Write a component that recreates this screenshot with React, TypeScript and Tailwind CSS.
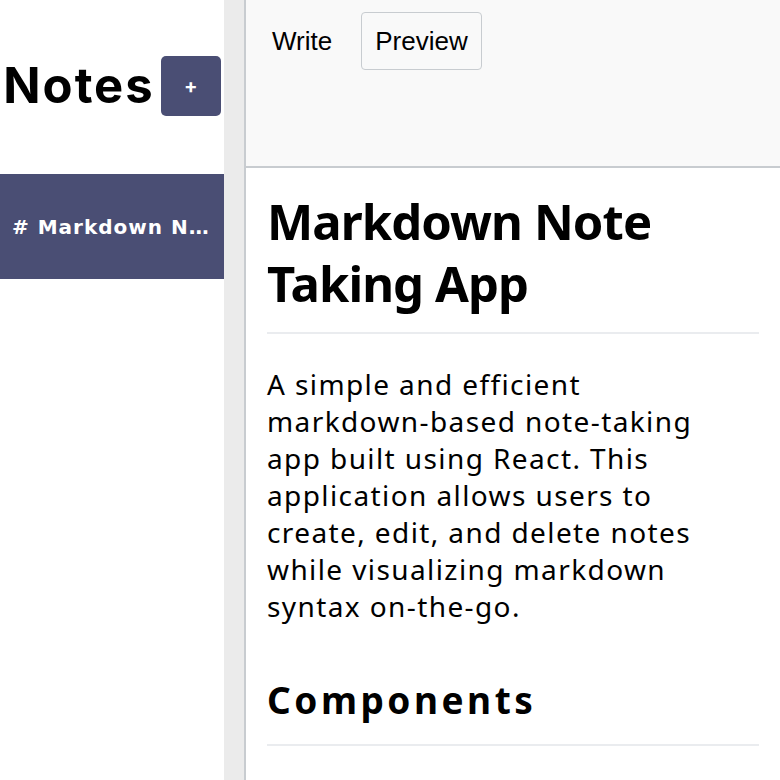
const notes = [{ id: 1, body: "# Markdown Note Taking App" }];

function Sidebar() {
  return (
    <aside className="w-[224px] shrink-0 bg-white">
      <div className="flex items-center justify-center gap-[6px] pt-[56px] pb-[58px]">
        <h3 className="font-['Inter',sans-serif] text-[49px] font-bold leading-[60px] tracking-[2px] text-black">
          Notes
        </h3>
        <button className="flex h-[60px] w-[60px] items-center justify-center rounded-[5px] bg-[#4a4e74] font-['Inter',sans-serif] text-[20px] font-bold text-white">
          +
        </button>
      </div>
      {notes.map((note) => (
        <div
          key={note.id}
          className="flex h-[105px] items-center bg-[#4a4e74] px-3 text-white"
        >
          <h4 className="truncate font-['DejaVu_Sans',sans-serif] text-[20px] font-bold tracking-[1px]">
            {note.body}
          </h4>
        </div>
      ))}
    </aside>
  );
}

const paragraph = [
  "A simple and efficient",
  "markdown-based note-taking",
  "app built using React. This",
  "application allows users to",
  "create, edit, and delete notes",
  "while visualizing markdown",
  "syntax on-the-go.",
];

function Editor() {
  return (
    <section className="flex min-w-0 flex-1 flex-col border-l-2 border-[#c8ccd0] bg-white">
      <div className="flex h-[168px] shrink-0 items-start gap-[15px] border-b-2 border-[#c8ccd0] bg-[#f9f9f9] pt-[12px] pl-[12px] font-['Liberation_Sans',sans-serif] text-[26px] text-black">
        <button className="rounded-[4px] border border-transparent px-[13px] py-[12px] leading-[32px]">
          Write
        </button>
        <button className="rounded-[4px] border border-[#c8ccd0] px-[13px] py-[12px] leading-[32px]">
          Preview
        </button>
      </div>
      <div className="flex-1 overflow-hidden px-[21px] font-['Noto_Sans',sans-serif] text-black">
        <h1 className="mt-[22px] border-b-2 border-[#eaecef] pb-[18px] text-[49px] font-bold leading-[62px] tracking-[-0.9px]">
          Markdown Note
          <br />
          Taking App
        </h1>
        <p className="mt-[32px] text-[28px] leading-[37px] tracking-[1.4px]">
          {paragraph.map((line) => (
            <span key={line} className="block whitespace-nowrap">
              {line}
            </span>
          ))}
        </p>
        <h2 className="mt-[51px] border-b-2 border-[#eaecef] pb-[20px] text-[37px] font-bold leading-[48px] tracking-[3.5px]">
          Components
        </h2>
      </div>
    </section>
  );
}

export default function App() {
  return (
    <div className="flex h-[780px] w-[780px] overflow-hidden bg-white">
      <Sidebar />
      <div className="w-[20px] shrink-0 bg-[#ebebeb]" />
      <Editor />
    </div>
  );
}
